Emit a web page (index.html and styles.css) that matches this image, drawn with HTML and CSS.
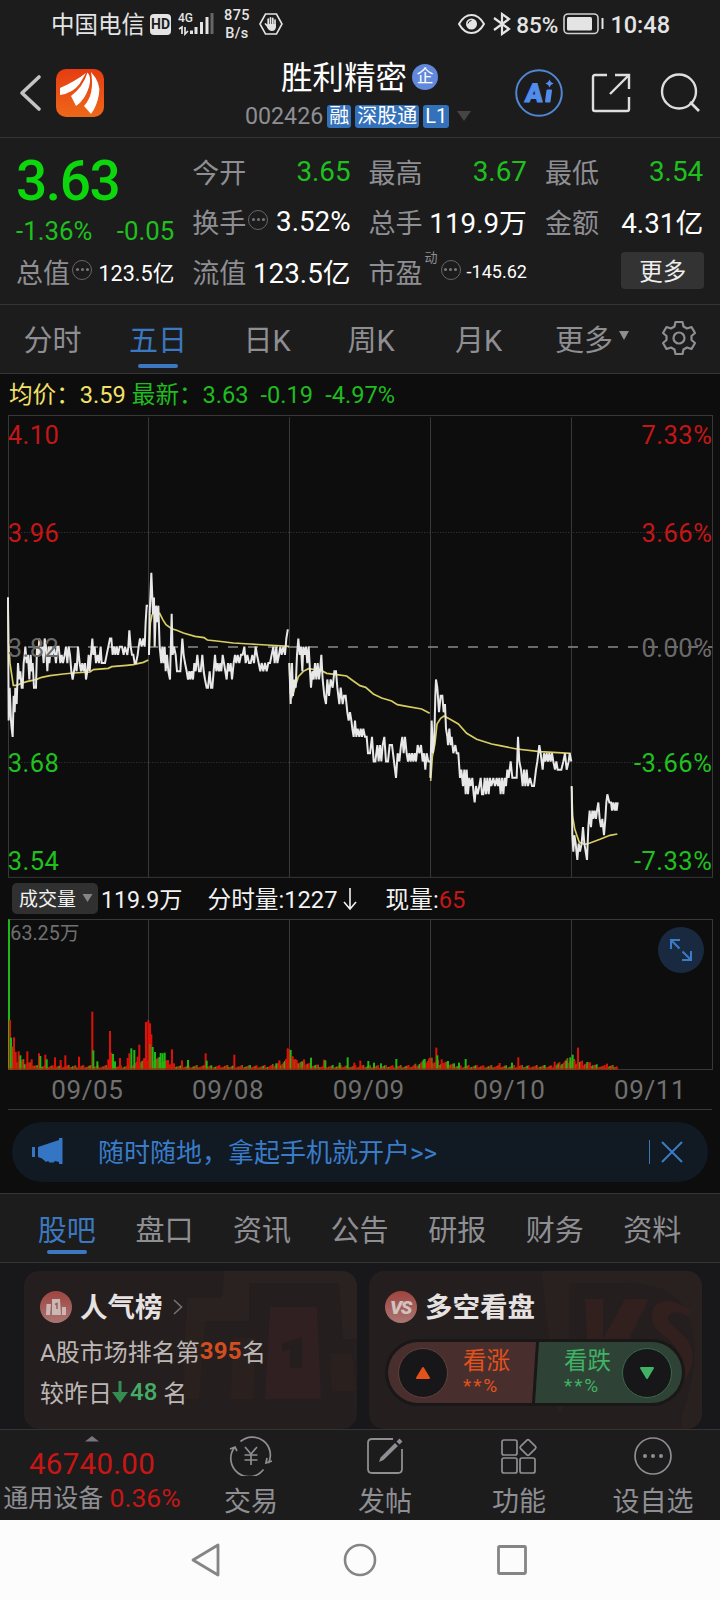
FILE: index.html
```html
<!DOCTYPE html>
<html lang="zh-CN">
<head>
  <meta charset="UTF-8">
  <title>胜利精密 002426</title>
  <link rel="stylesheet" href="styles.css">
</head>
<body>

  <div class="status-bar">
    <span class="carrier">中国电信</span>
    <span class="hd">HD</span>
    <svg class="signal" width="36" height="24" viewBox="0 0 36 24">
      <text x="0" y="10" class="signal-text">4G</text>
      <path d="M1 17l3-2v7M7 15v7l3-3" fill="none" stroke="#e4e4e4" stroke-width="1.7"/>
      <path d="M13.500 18.500v3.500M18 15v7M23.500 10v12M29 5v17" stroke="#e4e4e4" stroke-width="3"/>
      <path d="M34 1v21" stroke="#666" stroke-width="3"/>
    </svg>
    <span class="speed">875<br>B/s</span>
    <svg class="hand" width="24" height="24" viewBox="0 0 24 24">
      <path d="M1 12L6.500 2h11L23 12l-5.500 10h-11z" fill="none" stroke="#e4e4e4" stroke-width="1.600"/>
      <path d="M9.200 7v7M11.500 5.800V14M13.800 6.300v8M16 8v6M6.500 12l4 4.500" stroke="#e4e4e4" stroke-width="1.700" stroke-linecap="round"/>
      <path d="M8.500 12H17v3q-.5 4-4 4t-5-4z" fill="#e4e4e4"/>
    </svg>
    <div class="status-right">
      <svg width="27" height="22" viewBox="0 0 27 22">
        <path d="M1 11Q6 2 13.500 2T26 11Q21 20 13.500 20T1 11z" fill="none" stroke="#e4e4e4" stroke-width="2"/>
        <circle cx="13.500" cy="11" r="5.500" fill="#e4e4e4"/>
        <path d="M10 10.500q.5-3 3.500-3" fill="none" stroke="#1c1c1c" stroke-width="1"/>
      </svg>
      <svg class="bluetooth" width="20" height="24" viewBox="0 0 20 24">
        <path d="M2 6l15 11-7 5V2l7 5L2 18" fill="none" stroke="#e4e4e4" stroke-width="2.200"/>
      </svg>
      <span class="battery-text">85%</span>
      <svg class="battery" width="42" height="22" viewBox="0 0 42 22">
        <rect x="1" y="1" width="34" height="19.500" rx="4" fill="none" stroke="#d0d0d0" stroke-width="1.600"/>
        <rect x="4" y="4" width="25" height="13.500" rx="1.500" fill="#e4e4e4"/>
        <path d="M39.500 5v11" stroke="#e4e4e4" stroke-width="2"/>
      </svg>
      <span class="clock">10:48</span>
    </div>
  </div>

  <header class="header">
    <svg class="back" width="24" height="38" viewBox="0 0 24 38">
      <path d="M20 3L3 19l17 16" fill="none" stroke="#c4c4c4" stroke-width="3.600" stroke-linecap="round" stroke-linejoin="round"/>
    </svg>
    <svg class="logo" width="48" height="48" viewBox="0 0 48 48">
      <defs>
        <linearGradient id="logoBg" x1="0" y1="0" x2="0" y2="1">
          <stop offset="0" stop-color="#e63c12"/>
          <stop offset="1" stop-color="#ee6818"/>
        </linearGradient>
      </defs>
      <rect width="48" height="48" rx="10" fill="url(#logoBg)"/>
      <path d="M4 19Q18 13 30 4Q26 11 23.500 15Q17 24 4 26z" fill="#fff"/>
      <path d="M15 27Q27 18 31.500 3.500Q36 8 33 18Q29 31 20 37z" fill="#fff"/>
      <path d="M35 3Q45 14 43 25Q41 37 35 45L28 37Q39 25 35 3z" fill="#fff"/>
    </svg>
    <div class="stock">
      <div class="stock-name">胜利精密<span class="qi">企</span></div>
      <div class="stock-code">
        <span>002426</span>
        <span class="tag">融</span>
        <span class="tag">深股通</span>
        <span class="tag">L1</span>
        <svg width="16" height="11" viewBox="0 0 16 11"><path d="M1 0h14L8 10z" fill="#454545"/></svg>
      </div>
    </div>
    <div class="header-icons">
      <svg width="48" height="48" viewBox="0 0 48 48">
        <circle cx="24" cy="24" r="22.800" fill="none" stroke="#5186d4" stroke-width="2"/>
        <text transform="translate(9.500 33) skewX(-5)" class="ai-a">A</text>
        <path d="M32.500 21.500h3.500l-1.500 11h-3.500z" fill="#528cec" stroke="#528cec" stroke-width="2" stroke-linejoin="round"/>
        <path d="M34.500 10.500q.8 3 4 4-3.200 1-4 4-.8-3-4-4 3.200-1 4-4z" fill="#528cec"/>
      </svg>
      <svg class="share" width="40" height="40" viewBox="0 0 40 40">
        <path d="M16 2H4Q2 2 2 4v32q0 2 2 2h32q2 0 2-2V24M24 2h14v14M38 2L19 21" fill="none" stroke="#dedede" stroke-width="2.400"/>
      </svg>
      <svg class="search" width="42" height="42" viewBox="0 0 42 42">
        <circle cx="20" cy="19.500" r="17" fill="none" stroke="#dedede" stroke-width="2.400"/>
        <path d="M31 30l9 9" stroke="#dedede" stroke-width="2.600"/>
      </svg>
    </div>
  </header>

  <section class="quote">
    <div class="price-box">
      <div class="price">3.63</div>
      <div class="change"><span>-1.36%</span><span>-0.05</span></div>
    </div>
    <div class="cell"><label>今开</label><b class="green">3.65</b></div>
    <div class="cell"><label>最高</label><b class="green">3.67</b></div>
    <div class="cell"><label>最低</label><b class="green">3.54</b></div>
    <div class="cell"><label>换手</label><i class="dots"></i><b>3.52%</b></div>
    <div class="cell"><label>总手</label><b>119.9万</b></div>
    <div class="cell"><label>金额</label><b>4.31亿</b></div>
    <div class="cell"><label>总值</label><i class="dots"></i><b class="mid">123.5亿</b></div>
    <div class="cell"><label>流值</label><b>123.5亿</b></div>
    <div class="cell"><label>市盈</label><sup>动</sup><i class="dots"></i><b class="small">-145.62</b></div>
    <div class="cell"><button class="more-btn">更多</button></div>
  </section>

  <nav class="period-tabs">
    <span>分时</span>
    <span class="active">五日</span>
    <span>日K</span>
    <span>周K</span>
    <span>月K</span>
    <span>更多<svg class="caret" width="12" height="10" viewBox="0 0 12 10"><path d="M1 0h10L6 9z" fill="#8e8e93"/></svg></span>
    <span>
      <svg width="36" height="36" viewBox="0 0 36 36">
        <path d="M14.500 2h7l1 4.500 3.500 2 4.500-1.500 3.500 6-3.500 3v4l3.500 3-3.500 6-4.500-1.500-3.500 2-1 4.500h-7l-1-4.500-3.500-2L5.500 29 2 23l3.500-3v-4L2 13l3.500-6L10 8.500l3.500-2z" fill="none" stroke="#8e8e93" stroke-width="2.200" stroke-linejoin="round"/>
        <circle cx="18" cy="18" r="5.500" fill="none" stroke="#8e8e93" stroke-width="2.200"/>
      </svg>
    </span>
  </nav>

  <main class="charts">
    <div class="avg-line"><span class="yellow">均价：3.59</span><span class="latest">最新：<b>3.63</b><b>-0.19</b><b>-4.97%</b></span></div>

    <!-- drawn in thirds of a pixel -->
    <svg class="price-chart" width="720" height="463" viewBox="0 15 2160 1389">
      <g class="grid">
        <path d="M24 16.500H2139M24 1402H2139M25.500 16V1402M445.500 22V1402M868.500 22V1402M1291.500 22V1402M1714.500 22V1402M2137.500 16V1402"/>
        <path d="M24 367.500H2137M24 1057.500H2137" stroke-dasharray="3 5"/>
      </g>
      <path d="M24 711H2137" class="zero-line"/>
      <g class="average-line">
        <path d="M24 562L26 700L30 760L40 826L50 826L65 820L80 815L110 808L125 802L150 797L190 792L220 789L270 786L280 779L325 775L335 770L380 766L400 764L430 757L445 750"/>
        <path d="M447 735L451 640L456 615L464 607L470 618L479 610L488 628L498 644L515 656L530 661L550 669L585 679L612 683L622 690L650 693L700 699L750 702L800 705L867 709"/>
        <path d="M868 760L871 850L876 860L885 832L895 800L910 784L925 776L945 779L965 782L980 790L1010 794L1040 798L1060 813L1080 827L1097 832L1120 852L1145 864L1175 873L1192 884L1220 889L1265 897L1289 910"/>
        <path d="M1292 1113L1297 1040L1305 1000L1311 942L1322 925L1332 918L1345 925L1375 942L1400 970L1430 988L1475 1002L1500 1007L1550 1017L1620 1025L1712 1030"/>
        <path d="M1715 1131L1718 1220L1724 1256L1732 1280L1738 1297L1755 1303L1770 1299L1800 1288L1830 1276L1852 1272"/>
      </g>
      <g id="priceLines" class="price-line"></g>
      <g class="axis">
        <text x="23" y="102" class="up">4.10</text>
        <text x="23" y="396" class="up">3.96</text>
        <text x="23" y="740">3.82</text>
        <text x="23" y="1085" class="down">3.68</text>
        <text x="23" y="1380" class="down">3.54</text>
      </g>
      <g class="axis right">
        <text x="2137" y="102" class="up">7.33%</text>
        <text x="2137" y="396" class="up">3.66%</text>
        <text x="2137" y="740">0.00%</text>
        <text x="2137" y="1085" class="down">-3.66%</text>
        <text x="2137" y="1380" class="down">-7.33%</text>
      </g>
    </svg>

    <div class="volume-head">
      <span class="volume-btn">成交量<svg width="11" height="9" viewBox="0 0 11 9"><path d="M.5 1h10L5.500 9z" fill="#858589"/></svg></span>
      <span class="total">119.9万</span>
      <span class="minute">分时量:1227</span>
      <svg class="down-arrow" width="14" height="24" viewBox="0 0 14 24"><path d="M7 1v21M1 15l6 7 6-7" fill="none" stroke="#f0f0f0" stroke-width="1.600"/></svg>
      <span class="now">现量:<em>65</em></span>
    </div>

    <div class="volume-box">
      <svg width="720" height="151" viewBox="0 117 2160 453">
        <g class="grid">
          <path d="M24 118.500H2139M24 568.500H2139M25.500 118V568M445.500 118V568M868.500 118V568M1291.500 118V568M1714.500 118V568M2137.500 118V568"/>
        </g>
        <g id="volumeBars"></g>
        <text x="31" y="180" class="volume-max">63.25万</text>
      </svg>
      <div class="expand">
        <svg width="24" height="24" viewBox="0 0 24 24">
          <path d="M2 11V2h9M2 2l8.500 8.500M22 13v9h-9M22 22l-8.500-8.500" fill="none" stroke="#3a7cc8" stroke-width="2"/>
        </svg>
      </div>
    </div>
    <div class="dates">
      <span>09/05</span><span>09/08</span><span>09/09</span><span>09/10</span><span>09/11</span>
    </div>

    <div class="banner">
      <svg class="horn" width="32" height="28" viewBox="0 0 32 28">
        <path d="M0 9h3v10H0zM6 9L27 2V0h3.500v26H27v-2l-4-1-1.500 1.500h-4L16 23l-2 1-4-3.500-4-1.500z" fill="#3476c4"/>
      </svg>
      <span class="banner-text">随时随地，拿起手机就开户&gt;&gt;</span>
      <svg class="close" width="36" height="26" viewBox="0 0 36 26">
        <path d="M1.500 1v24" stroke="#3a76b8" stroke-width="1"/>
        <path d="M14 3l20 20M34 3L14 23" stroke="#3a7cc8" stroke-width="2"/>
      </svg>
    </div>
  </main>

  <nav class="info-tabs">
    <span class="active">股吧</span>
    <span>盘口</span>
    <span>资讯</span>
    <span>公告</span>
    <span>研报</span>
    <span>财务</span>
    <span>资料</span>
  </nav>

  <section class="cards">
    <div class="card">
      <svg class="card-bg" width="333" height="158" viewBox="0 0 333 158">
        <path d="M200 0h133v68h-14L315 12h-90v38h-62V27h35z" fill="#292220"/>
        <path d="M246 36h47l4 92h-56z" fill="#3a2224" opacity=".6"/>
        <path d="M209 67h23l-3 61h-22zM306 83h22l4 37h-24zM161 50h20l-6 78h-15z" fill="#30231f" opacity=".5"/>
        <path d="M258 73l20-7v31h-12V79l-8 1z" fill="#241e1e"/>
      </svg>
      <div class="card-title">
        <svg width="32" height="32" viewBox="0 0 32 32">
          <defs>
            <linearGradient id="badge" x1="0" y1="0" x2="0" y2="1">
              <stop offset="0" stop-color="#9e4440"/>
              <stop offset="1" stop-color="#aa7672"/>
            </linearGradient>
          </defs>
          <circle cx="16" cy="16" r="16" fill="url(#badge)"/>
          <path d="M6.500 13h4.500l-1 11H6zM12 8h8l1 16h-9zM22 16h4v8h-4z" fill="#cbb8b5"/>
          <path d="M15 13.500l2-1v5.500" fill="none" stroke="#98605c" stroke-width="1.500"/>
        </svg>
        <h3>人气榜</h3>
        <svg class="chevron" width="10" height="16" viewBox="0 0 10 16"><path d="M1 1l7.500 7L1 15" fill="none" stroke="#77716f" stroke-width="1.600"/></svg>
      </div>
      <p>A股市场排名第<b class="rank">395</b>名</p>
      <p>较昨日<svg class="fall" width="16" height="22" viewBox="0 0 16 22"><path d="M6.500 0h3v11H16L8 22 0 11h6.500z" fill="#368c50"/></svg><b class="fall-num">48</b> 名</p>
    </div>

    <div class="card">
      <svg class="card-bg" width="333" height="158" viewBox="0 0 333 158">
        <path d="M172 0h161v158h-20V145q20-60 8-95-10-38-65-38h-56v58l-6 70h-5z" fill="#282120"/>
        <path d="M216 28h18v40l22-40h24l-38 76h-22zM323 40q-26-18-38-4-8 18 12 30 20 16 6 30-16 10-34-4l-4 20q36 16 54-8 14-28-12-46-14-12-4-16 10-2 16 4z" fill="#32201f"/>
      </svg>
      <div class="card-title">
        <svg width="32" height="32" viewBox="0 0 32 32">
          <circle cx="16" cy="16" r="16" fill="url(#badge)"/>
          <text x="5" y="23" class="vs">VS</text>
        </svg>
        <h3>多空看盘</h3>
      </div>
      <div class="vote">
        <div class="vote-up">
          <i><svg width="16" height="14" viewBox="0 0 16 14"><path d="M8 2l6 10H2z" fill="#e4521c" stroke="#e4521c" stroke-width="2" stroke-linejoin="round"/></svg></i>
          <span>看涨<small>**%</small></span>
        </div>
        <div class="vote-down">
          <span>看跌<small>**%</small></span>
          <i><svg width="16" height="14" viewBox="0 0 16 14"><path d="M8 12L2 2h12z" fill="#40b265" stroke="#40b265" stroke-width="2" stroke-linejoin="round"/></svg></i>
        </div>
      </div>
    </div>
  </section>

  <footer class="toolbar">
    <div class="sector">
      <svg width="14" height="6" viewBox="0 0 14 6"><path d="M0 5.500L7 0l7 5.500z" fill="#77777b"/></svg>
      <strong>46740.00</strong>
      <span>通用设备 <em>0.36%</em></span>
    </div>
    <div class="tool">
      <svg width="44" height="40" viewBox="0 0 44 40">
        <path d="M11.500 5.500A18 18 0 0 1 39.500 27M34.500 33.500A18 18 0 0 1 5.500 11.500M1 13l5-2 2 4M43 25l-6 2 1-5" fill="none" stroke="#8e8e93" stroke-width="1.700"/>
        <path d="M16 11l6 7 6-7M22 18v11M15.500 19h13M15.500 24h13" fill="none" stroke="#8e8e93" stroke-width="1.700"/>
      </svg>
      <span>交易</span>
    </div>
    <div class="tool">
      <svg width="40" height="40" viewBox="0 0 40 40">
        <path d="M28 3H7Q3 3 3 7v26q0 4 4 4h26q4 0 4-4V13" fill="none" stroke="#8e8e93" stroke-width="1.800"/>
        <path d="M14 26l1.500-4.500L30 7l3 3-14.500 14zM31.500 5.500L34.500 2.500 37.500 5.500 34.500 8.500z" fill="#8e8e93"/>
      </svg>
      <span>发帖</span>
    </div>
    <div class="tool">
      <svg width="40" height="40" viewBox="0 0 40 40">
        <g fill="none" stroke="#8e8e93" stroke-width="1.700">
          <rect x="3" y="4" width="15" height="15" rx="2"/>
          <rect x="3" y="22" width="15" height="15" rx="2"/>
          <rect x="21" y="22" width="15" height="15" rx="2"/>
          <rect x="23" y="5.500" width="12" height="12" rx="1.500" transform="rotate(45 29 11.500)"/>
        </g>
      </svg>
      <span>功能</span>
    </div>
    <div class="tool">
      <svg width="40" height="40" viewBox="0 0 40 40">
        <circle cx="20" cy="20" r="18" fill="none" stroke="#8e8e93" stroke-width="1.700"/>
        <g fill="#8e8e93"><circle cx="12" cy="20" r="2"/><circle cx="20" cy="20" r="2"/><circle cx="28" cy="20" r="2"/></g>
      </svg>
      <span>设自选</span>
    </div>
  </footer>

  <div class="android-nav">
    <svg width="32" height="36" viewBox="0 0 32 36"><path d="M28 3v30L3 18z" fill="none" stroke="#858585" stroke-width="2.800" stroke-linejoin="round"/></svg>
    <svg width="36" height="36" viewBox="0 0 36 36"><circle cx="18" cy="18" r="15" fill="none" stroke="#858585" stroke-width="2.600"/></svg>
    <svg width="32" height="32" viewBox="0 0 32 32"><rect x="2.500" y="2.500" width="27" height="27" rx="1" fill="none" stroke="#858585" stroke-width="2.800"/></svg>
  </div>

  <script src="chart.js"></script>
</body>
</html>
```

FILE: styles.css
```css
* {
  box-sizing: border-box;
}

body {
  margin: 0;
  width: 720px;
  background: #1c1c1c;
  color: #8e8e93;
  font-family: Roboto, "Noto Sans CJK SC", sans-serif;
}

svg {
  display: block;
  flex: none;
}

em, i {
  font-style: normal;
}

span, label, b {
  white-space: nowrap;
}

/* status bar */
.status-bar {
  display: flex;
  align-items: center;
  height: 48px;
  padding-left: 51px;
  color: #e4e4e4;
}

.carrier {
  padding-top: 2px;
  font-size: 23.5px;
  line-height: 46px;
}

.hd {
  width: 21px;
  height: 21px;
  margin-left: 5px;
  border-radius: 4px;
  background: #e4e4e4;
  color: #1c1c1c;
  font-size: 14px;
  font-weight: bold;
  line-height: 21px;
  text-align: center;
}

.signal {
  margin-left: 7px;
}

.signal-text {
  fill: #e4e4e4;
  font-size: 12px;
  font-weight: 500;
}

.speed {
  width: 30px;
  margin-left: 8px;
  padding-top: 2px;
  font-size: 14.5px;
  font-weight: 500;
  line-height: 18px;
  text-align: center;
  letter-spacing: .4px;
}

.hand {
  margin-left: 7px;
}

.status-right {
  display: flex;
  align-items: center;
  margin-left: auto;
  padding-right: 50px;
}

.bluetooth {
  margin-left: 7px;
}

.battery-text {
  margin-left: 4px;
  padding-top: 2px;
  font-size: 22.5px;
  font-weight: 500;
}

.battery {
  margin-left: 5px;
}

.clock {
  margin-left: 5px;
  padding-top: 2px;
  font-size: 23.5px;
  font-weight: 500;
}

/* header */
.header {
  display: flex;
  height: 90px;
  padding: 0 20px 0 19px;
  border-bottom: 1px solid #343434;
}

.back {
  margin-top: 26px;
}

.logo {
  margin: 21px 0 0 13px;
}

.stock {
  flex: 1;
  margin: 4px 0 0 141px;
}

.stock-name {
  display: flex;
  align-items: center;
  height: 46px;
  margin-left: 36px;
  color: #fff;
  font-size: 31.5px;
}

.qi {
  width: 26px;
  height: 26px;
  margin: 3px 0 0 5px;
  border-radius: 50%;
  background: #6288dc;
  font-size: 17px;
  line-height: 25px;
  text-align: center;
}

.stock-code {
  display: flex;
  align-items: center;
  gap: 4px;
  height: 32px;
  margin-top: 2px;
  font-size: 23.2px;
}

.tag {
  height: 23px;
  padding: 0 2px;
  border-radius: 3px;
  background: #3371ba;
  color: #fff;
  font-size: 20px;
  line-height: 22px;
}

.stock-code svg {
  margin-left: 3px;
}

.header-icons {
  display: flex;
  align-items: flex-start;
  padding-top: 21px;
}

.ai-a {
  fill: #528cec;
  stroke: #528cec;
  stroke-width: 1px;
  font-size: 26px;
  font-weight: 900;
}

.share {
  margin: 4px 0 0 28px;
}

.search {
  margin: 3px -1px 0 28px;
}

/* quote numbers */
.quote {
  display: grid;
  grid-template-columns: repeat(4, 158.300px);
  grid-template-rows: repeat(3, 50px);
  column-gap: 18px;
  height: 167px;
  padding: 8px 16px 0 16px;
  border-bottom: 1px solid #343434;
}

.price-box {
  grid-row: span 2;
  color: #1ec01e;
}

.price {
  height: 60px;
  color: #0cd60c;
  font-size: 55px;
  font-weight: 500;
  line-height: 70px;
  letter-spacing: -1.4px;
}

.change {
  display: flex;
  justify-content: space-between;
  font-size: 25.8px;
  line-height: 50px;
}

.cell {
  display: flex;
  align-items: center;
  font-size: 27px;
}

.cell b {
  margin-left: auto;
  color: #fff;
  font-size: 27.8px;
  font-weight: normal;
}

.cell b.green {
  color: #1ec01e;
}

.cell b.mid {
  font-size: 21.6px;
}

.cell b.small {
  font-size: 18px;
}

.cell sup {
  margin: -29px 1px 0 2px;
  font-size: 13px;
}

.dots {
  display: flex;
  align-items: center;
  justify-content: center;
  flex: none;
  width: 20px;
  height: 20px;
  margin: -3px 0 0 2px;
  border: 1.5px solid #66666a;
  border-radius: 50%;
}

.dots::before {
  content: "";
  width: 3px;
  height: 3px;
  border-radius: 50%;
  background: #77777b;
  box-shadow: -5px 0 #77777b, 5px 0 #77777b;
}

.more-btn {
  width: 83px;
  height: 37px;
  margin: -1px -1px 0 auto;
  padding: 0 0 2px;
  border: none;
  border-radius: 4px;
  background: #333;
  color: #eee;
  font: 23.5px Roboto, "Noto Sans CJK SC", sans-serif;
}

/* period tabs */
.period-tabs {
  display: grid;
  grid-template-columns: 105px 106px 112px 96px 119px 109px 64px;
  height: 69px;
  border-bottom: 1px solid #343434;
  font-size: 29px;
}

.period-tabs span {
  display: flex;
  align-items: center;
  justify-content: center;
  position: relative;
  padding-bottom: 2px;
}

.caret {
  margin: -4px 0 0 5px;
}

.active {
  position: relative;
  color: #3b78c0;
}

.active::after {
  content: "";
  position: absolute;
  bottom: 5px;
  left: 50%;
  width: 40px;
  height: 4px;
  margin-left: -20px;
  border-radius: 2px;
  background: #3b78c0;
}

.info-tabs .active::after {
  bottom: 8px;
}

/* charts */
.charts {
  height: 819px;
  background: #0d0d0d;
}

.avg-line {
  display: flex;
  gap: 6px;
  height: 41px;
  padding-left: 9px;
  color: #1fbc1f;
  font-size: 23.6px;
  line-height: 43px;
}

.latest b {
  margin-right: 12px;
  font-weight: normal;
}

.yellow {
  color: #f2e067;
}

.grid {
  fill: none;
  stroke: #383838;
  stroke-width: 3;
}

.zero-line {
  stroke: #8a8a8a;
  stroke-width: 5;
  stroke-dasharray: 30 30;
}

.axis text {
  fill: #6a6a6a;
  font-size: 76.5px;
  letter-spacing: 1.5px;
}

.axis.right text {
  text-anchor: end;
}

.axis .up {
  fill: #c41616;
}

.axis .down {
  fill: #20c020;
}

.price-line path {
  fill: none;
  stroke: #e8e8e8;
  stroke-width: 6;
}

.average-line path {
  fill: none;
  stroke: #d8cd62;
  stroke-width: 5;
}

.volume-head {
  display: flex;
  align-items: center;
  height: 41px;
  padding-left: 12px;
  color: #f2f2f2;
  font-size: 23.7px;
}

.volume-head span {
  padding-bottom: 2px;
}

.volume-head .volume-btn {
  display: flex;
  align-items: center;
  gap: 6px;
  width: 86px;
  height: 31px;
  margin-right: 3px;
  padding-left: 7px;
  border-radius: 5px;
  background: #303030;
  font-size: 19px;
}

.total {
  font-size: 23.2px;
}

.minute {
  margin-left: 25px;
}

.down-arrow {
  margin-left: 5px;
}

.now {
  margin-left: 29px;
}

.now em {
  color: #c41616;
}

.volume-box {
  position: relative;
}

.volume-max {
  fill: #707070;
  font-size: 59px;
}

.expand {
  position: absolute;
  top: 8px;
  right: 16px;
  display: flex;
  align-items: center;
  justify-content: center;
  width: 46px;
  height: 46px;
  border-radius: 50%;
  background: #192a40;
}

.dates {
  display: grid;
  grid-template-columns: repeat(5, 140.700px);
  height: 40px;
  margin: 0 8px;
  padding-left: 9px;
  border-bottom: 1px solid #383838;
  color: #707070;
  font-size: 26px;
  letter-spacing: .6px;
  line-height: 40px;
  text-align: center;
}

.banner {
  display: flex;
  align-items: center;
  height: 60px;
  margin: 12px 12px 0;
  padding: 0 24px 0 20px;
  border-radius: 30px;
  background: #111923;
  color: #3a7cc8;
  font-size: 26px;
}

.banner-text {
  margin-left: 34px;
  padding-bottom: 3px;
}

.close {
  margin-left: auto;
}

/* info tabs */
.info-tabs {
  display: grid;
  grid-template-columns: repeat(7, 97.6px);
  height: 70px;
  padding-left: 18px;
  border-top: 1px solid #343434;
  border-bottom: 1px solid #343434;
  font-size: 29px;
  line-height: 74px;
  text-align: center;
}

.info-tabs span {
  height: 68px;
}

/* cards */
.cards {
  display: flex;
  gap: 12px;
  height: 166px;
  padding: 8px 18px 0 24px;
  background: #18181a;
}

.card {
  position: relative;
  width: 333px;
  height: 158px;
  padding: 15px 16px 0;
  overflow: hidden;
  border-radius: 15px;
  background: #241e1e;
  color: #bcb6b4;
  font-size: 24px;
}

.card > * {
  position: relative;
}

.card .card-bg {
  position: absolute;
  top: 0;
  left: 0;
}

.card-title {
  display: flex;
  align-items: center;
  height: 42px;
}

.card-title h3 {
  margin: 2px 0 0 8px;
  color: #e6e2e1;
  font-size: 27.5px;
  line-height: 42px;
}

.chevron {
  margin-left: 10px;
}

.card p {
  display: flex;
  align-items: center;
  height: 41px;
  margin: 0;
  white-space: pre;
}

.card-title + p {
  margin-top: 2px;
}

.rank {
  margin-top: 1px;
  color: #d24e20;
  letter-spacing: .3px;
}

.fall-num {
  margin-left: 2px;
  color: #44ac66;
  font-weight: 500;
}

.vs {
  fill: #d2c2c0;
  font-size: 19px;
  font-weight: 900;
  font-style: italic;
  letter-spacing: -1.5px;
}

.vote {
  display: flex;
  width: 300px;
  height: 67px;
  margin-top: 11px;
  padding: 3px;
  border-radius: 34px;
  background: #191717;
}

.vote > div {
  display: flex;
  align-items: center;
  height: 61px;
  padding: 0 10px;
}

.vote i {
  display: flex;
  align-items: center;
  justify-content: center;
  width: 50px;
  height: 50px;
  border: 1px solid #634039;
  border-radius: 50%;
  background: #171719;
}

.vote .vote-up {
  width: 149px;
  border-radius: 31px 0 0 31px;
  background: #482f2d;
  color: #e4521c;
  clip-path: polygon(0 0, 100% 0, calc(100% - 4px) 100%, 0 100%);
}

.vote .vote-down {
  width: 148px;
  margin-left: -1px;
  border-radius: 0 31px 31px 0;
  background: #2f4236;
  color: #40b265;
  clip-path: polygon(4px 0, 100% 0, 100% 100%, 0 100%);
}

.vote-down i {
  margin-left: auto;
  border-color: #376b4a;
}

.vote span {
  margin-top: -5px;
  font-size: 23.5px;
  line-height: 32px;
}

.vote-up span {
  margin-left: 15px;
}

.vote-down span {
  margin-left: 19px;
}

.vote small {
  display: block;
  font-size: 19px;
  line-height: 18px;
  letter-spacing: 2px;
}

/* toolbar */
.toolbar {
  display: grid;
  grid-template-columns: 184px repeat(4, 134px);
  height: 91px;
  border-top: 1px solid #343434;
}

.sector {
  display: flex;
  flex-direction: column;
  align-items: center;
  padding-top: 6px;
  font-size: 25px;
}

.sector strong {
  margin-top: 4px;
  color: #c81616;
  font-size: 29.5px;
  font-weight: normal;
  line-height: 36px;
  letter-spacing: .3px;
}

.sector span {
  margin-top: -2px;
  line-height: 36px;
}

.sector em {
  color: #c81616;
  font-size: 26.5px;
}

.tool {
  display: flex;
  flex-direction: column;
  align-items: center;
  padding-top: 6px;
  font-size: 27px;
}

.tool span {
  margin-top: 6px;
  line-height: 40px;
}

.android-nav {
  display: flex;
  align-items: center;
  height: 80px;
  padding-left: 190px;
  background: #fcfcfc;
}

.android-nav svg + svg {
  margin-left: 120px;
}

.android-nav svg + svg + svg {
  margin-left: 118px;
}
```

FILE: chart.js
```js
// x position and price (in cents) of each day
const days = [
  "24,388 26,373 29,377 33,373 35,372 38,371 41,376 44,374 46,377 50,375 54,380 58,378 61,379 65,377 68,377 71,380 74,381 76,382 80,380 84,381 88,378 92,381 95,379 98,380 102,377 108,377 111,382 115,381 118,383 122,381 127,382 131,380 134,383 138,382 142,379 146,382 148,380 153,382 157,381 162,382 168,380 172,382 176,382 181,380 185,381 189,380 194,381 198,382 202,380 206,382 210,381 214,379 218,378 222,379 226,380 230,379 234,382 239,380 243,379 247,380 251,379 255,380 258,378 262,379 266,381 269,379 273,381 277,383 280,381 284,382 288,380 293,381 297,380 302,382 305,380 310,380 315,380 320,381 325,382 330,383 334,383 338,381 342,382 346,381 350,382 354,381 359,382 366,382 371,381 375,382 382,381 385,382 388,384 392,382 396,381 400,381 404,380 408,380 413,381 416,382 420,383 425,382 430,383 434,382 437,385 440,387 444,387",
  "447,381 449,386 454,391 457,388 459,386 462,388 464,382 468,387 471,385 475,387 479,382 484,380 487,382 491,380 494,382 497,379 501,381 505,379 510,378 515,386 518,381 522,382 527,381 531,379 536,379 541,379 547,383 551,381 555,380 560,379 564,378 568,379 571,378 575,379 579,378 583,380 587,379 592,381 597,379 602,379 607,381 611,379 615,378 620,377 624,377 629,379 633,377 637,377 641,379 645,381 649,379 653,380 657,379 661,380 664,379 668,381 672,380 676,379 680,378 684,380 688,379 692,380 696,378 701,380 705,381 709,380 713,381 718,380 723,381 728,381 733,382 737,380 742,381 747,380 752,380 757,381 762,380 767,382 771,381 776,380 781,379 785,380 790,379 795,380 800,379 805,380 810,380 815,381 820,382 824,380 829,382 832,380 837,381 841,382 845,381 850,382 855,381 859,383 863,384 866,384",
  "868,380 872,375 876,380 879,376 883,378 887,377 891,381 895,383 899,381 903,382 907,379 910,382 914,381 918,382 922,380 926,382 930,379 933,377 937,379 941,378 945,380 949,378 953,380 957,378 960,379 964,381 968,378 973,376 978,375 982,378 987,376 992,378 998,377 1003,379 1008,379 1012,377 1018,375 1022,377 1028,375 1032,376 1037,376 1042,374 1046,373 1050,374 1054,373 1057,372 1061,371 1065,373 1069,371 1073,372 1078,371 1082,372 1086,371 1090,372 1095,371 1100,371 1104,369 1110,369 1116,371 1121,368 1126,368 1132,370 1136,368 1140,370 1144,368 1148,370 1153,371 1158,368 1164,368 1169,370 1176,370 1182,368 1188,366 1193,369 1198,368 1203,370 1207,371 1211,369 1215,371 1220,369 1224,368 1228,369 1232,368 1236,369 1240,368 1244,369 1248,368 1253,370 1258,369 1263,370 1268,368 1272,369 1276,367 1280,369 1285,368 1290,368",
  "1291,366 1295,373 1299,369 1303,371 1306,376 1308,378 1312,377 1317,374 1322,376 1327,376 1331,374 1335,375 1338,372 1342,371 1344,370 1348,372 1352,370 1355,371 1360,369 1366,370 1370,369 1375,369 1380,366 1384,367 1389,365 1393,367 1397,364 1400,367 1404,364 1408,366 1412,365 1417,366 1421,364 1424,363 1428,365 1433,364 1438,365 1442,366 1446,364 1450,364 1454,366 1458,364 1462,366 1466,364 1470,366 1474,365 1480,366 1485,365 1490,366 1494,365 1498,366 1502,364 1506,366 1510,364 1514,366 1518,365 1522,367 1526,366 1532,368 1537,366 1544,366 1550,366 1554,371 1558,368 1563,367 1568,365 1572,367 1576,365 1580,367 1584,365 1590,366 1596,365 1602,365 1608,367 1612,368 1618,370 1622,369 1628,367 1632,369 1636,368 1640,369 1644,368 1648,369 1652,368 1656,369 1660,368 1665,367 1669,368 1673,367 1678,367 1684,367 1690,368 1695,369 1700,367 1706,368 1709,369 1714,368",
  "1715,365 1717,359 1720,357 1723,359 1727,358 1732,356 1736,358 1740,357 1745,358 1749,360 1753,358 1757,357 1761,356 1765,360 1769,362 1773,360 1777,362 1780,361 1784,362 1788,361 1791,362 1795,363 1799,361 1803,360 1807,361 1812,359 1816,361 1819,363 1822,364 1828,363 1833,363 1836,362 1840,363 1844,362 1848,363 1850,362 1853,363"
];

document.getElementById("priceLines").innerHTML = days.map(day => {
  const points = day.split(" ").map(p => {
    const [x, cents] = p.split(",").map(Number);
    return x + " " + (710 + (382 - cents) * 24.6).toFixed(1);
  });
  return `<path d="M${points.join("L")}"/>`;
}).join("");

// tall bars: x, height, colour
const peaks = [
  [26, 450, "g"], [29, 148, "r"], [32, 95, "g"], [36, 68, "o"], [41, 96, "r"], [46, 52, "r"], [55, 54, "r"], [60, 42, "g"],
  [81, 54, "r"], [94, 30, "r"], [116, 48, "r"], [120, 40, "g"], [135, 44, "r"], [139, 30, "g"], [164, 36, "r"], [181, 28, "r"],
  [195, 42, "r"], [236, 38, "r"], [276, 173, "r"], [279, 57, "g"], [291, 24, "g"], [324, 30, "r"], [329, 115, "r"], [333, 50, "r"],
  [338, 46, "g"], [344, 24, "g"], [359, 34, "r"], [382, 34, "r"], [387, 48, "r"], [393, 63, "g"], [402, 58, "g"], [412, 38, "r"],
  [417, 74, "r"], [432, 34, "r"], [437, 142, "r"], [444, 147, "r"], [449, 138, "r"], [453, 105, "r"], [449, 76, "o"], [457, 67, "g"],
  [464, 52, "g"], [470, 30, "o"], [481, 49, "g"], [487, 48, "g"], [493, 50, "g"], [503, 28, "r"], [515, 60, "r"], [545, 27, "r"],
  [563, 28, "g"], [616, 48, "r"], [619, 26, "g"], [702, 44, "r"], [828, 18, "g"], [837, 27, "r"], [857, 30, "r"], [862, 63, "r"],
  [867, 60, "r"], [871, 58, "g"], [876, 40, "r"], [889, 28, "r"], [911, 30, "r"], [932, 35, "g"], [971, 29, "r"], [975, 27, "g"],
  [1018, 20, "g"], [1042, 36, "g"], [1062, 20, "r"], [1080, 26, "r"], [1104, 25, "g"], [1121, 20, "g"], [1142, 18, "g"], [1188, 31, "g"],
  [1273, 31, "g"], [1287, 33, "r"], [1294, 35, "o"], [1308, 65, "r"], [1311, 42, "g"], [1324, 30, "r"], [1343, 25, "g"], [1376, 20, "g"],
  [1396, 31, "g"], [1498, 19, "r"], [1535, 20, "g"], [1554, 36, "r"], [1663, 23, "r"], [1698, 26, "g"], [1710, 36, "g"], [1717, 44, "g"],
  [1723, 26, "r"], [1733, 65, "r"], [1761, 22, "g"], [1765, 19, "r"], [1820, 17, "r"]
];
const colors = { r: "#dc120a", g: "#20b814", o: "#8a5a0c" };
let bars = "";

function bar(x, height, color, width) {
  bars += `<rect x="${x - 2}" y="${568 - height}" width="${width}" height="${height}" fill="${colors[color]}"/>`;
}

// low bars, taller around the open and the close
for (let x = 26, n = 0; x < 1852; x += 4, n++) {
  const noise = (n * 37 % 17) / 17;
  const pos = (x - 24) % 422.5;
  let base = 7;
  if (pos < 90) base += (90 - pos) / (x < 880 ? 3 : 5);
  if (pos > 365) base += (pos - 365) / 2.6;
  const height = Math.round(base * (.65 + noise * .6) + noise * 5);
  bar(x, height, "rogror"[n * 11 % 13 % 6], 5);
}
peaks.forEach(p => bar(p[0], p[1], p[2], 6));
bars += `<rect x="24" y="565" width="1831" height="3" fill="#a03008"/>`;

document.getElementById("volumeBars").innerHTML = bars;
```
